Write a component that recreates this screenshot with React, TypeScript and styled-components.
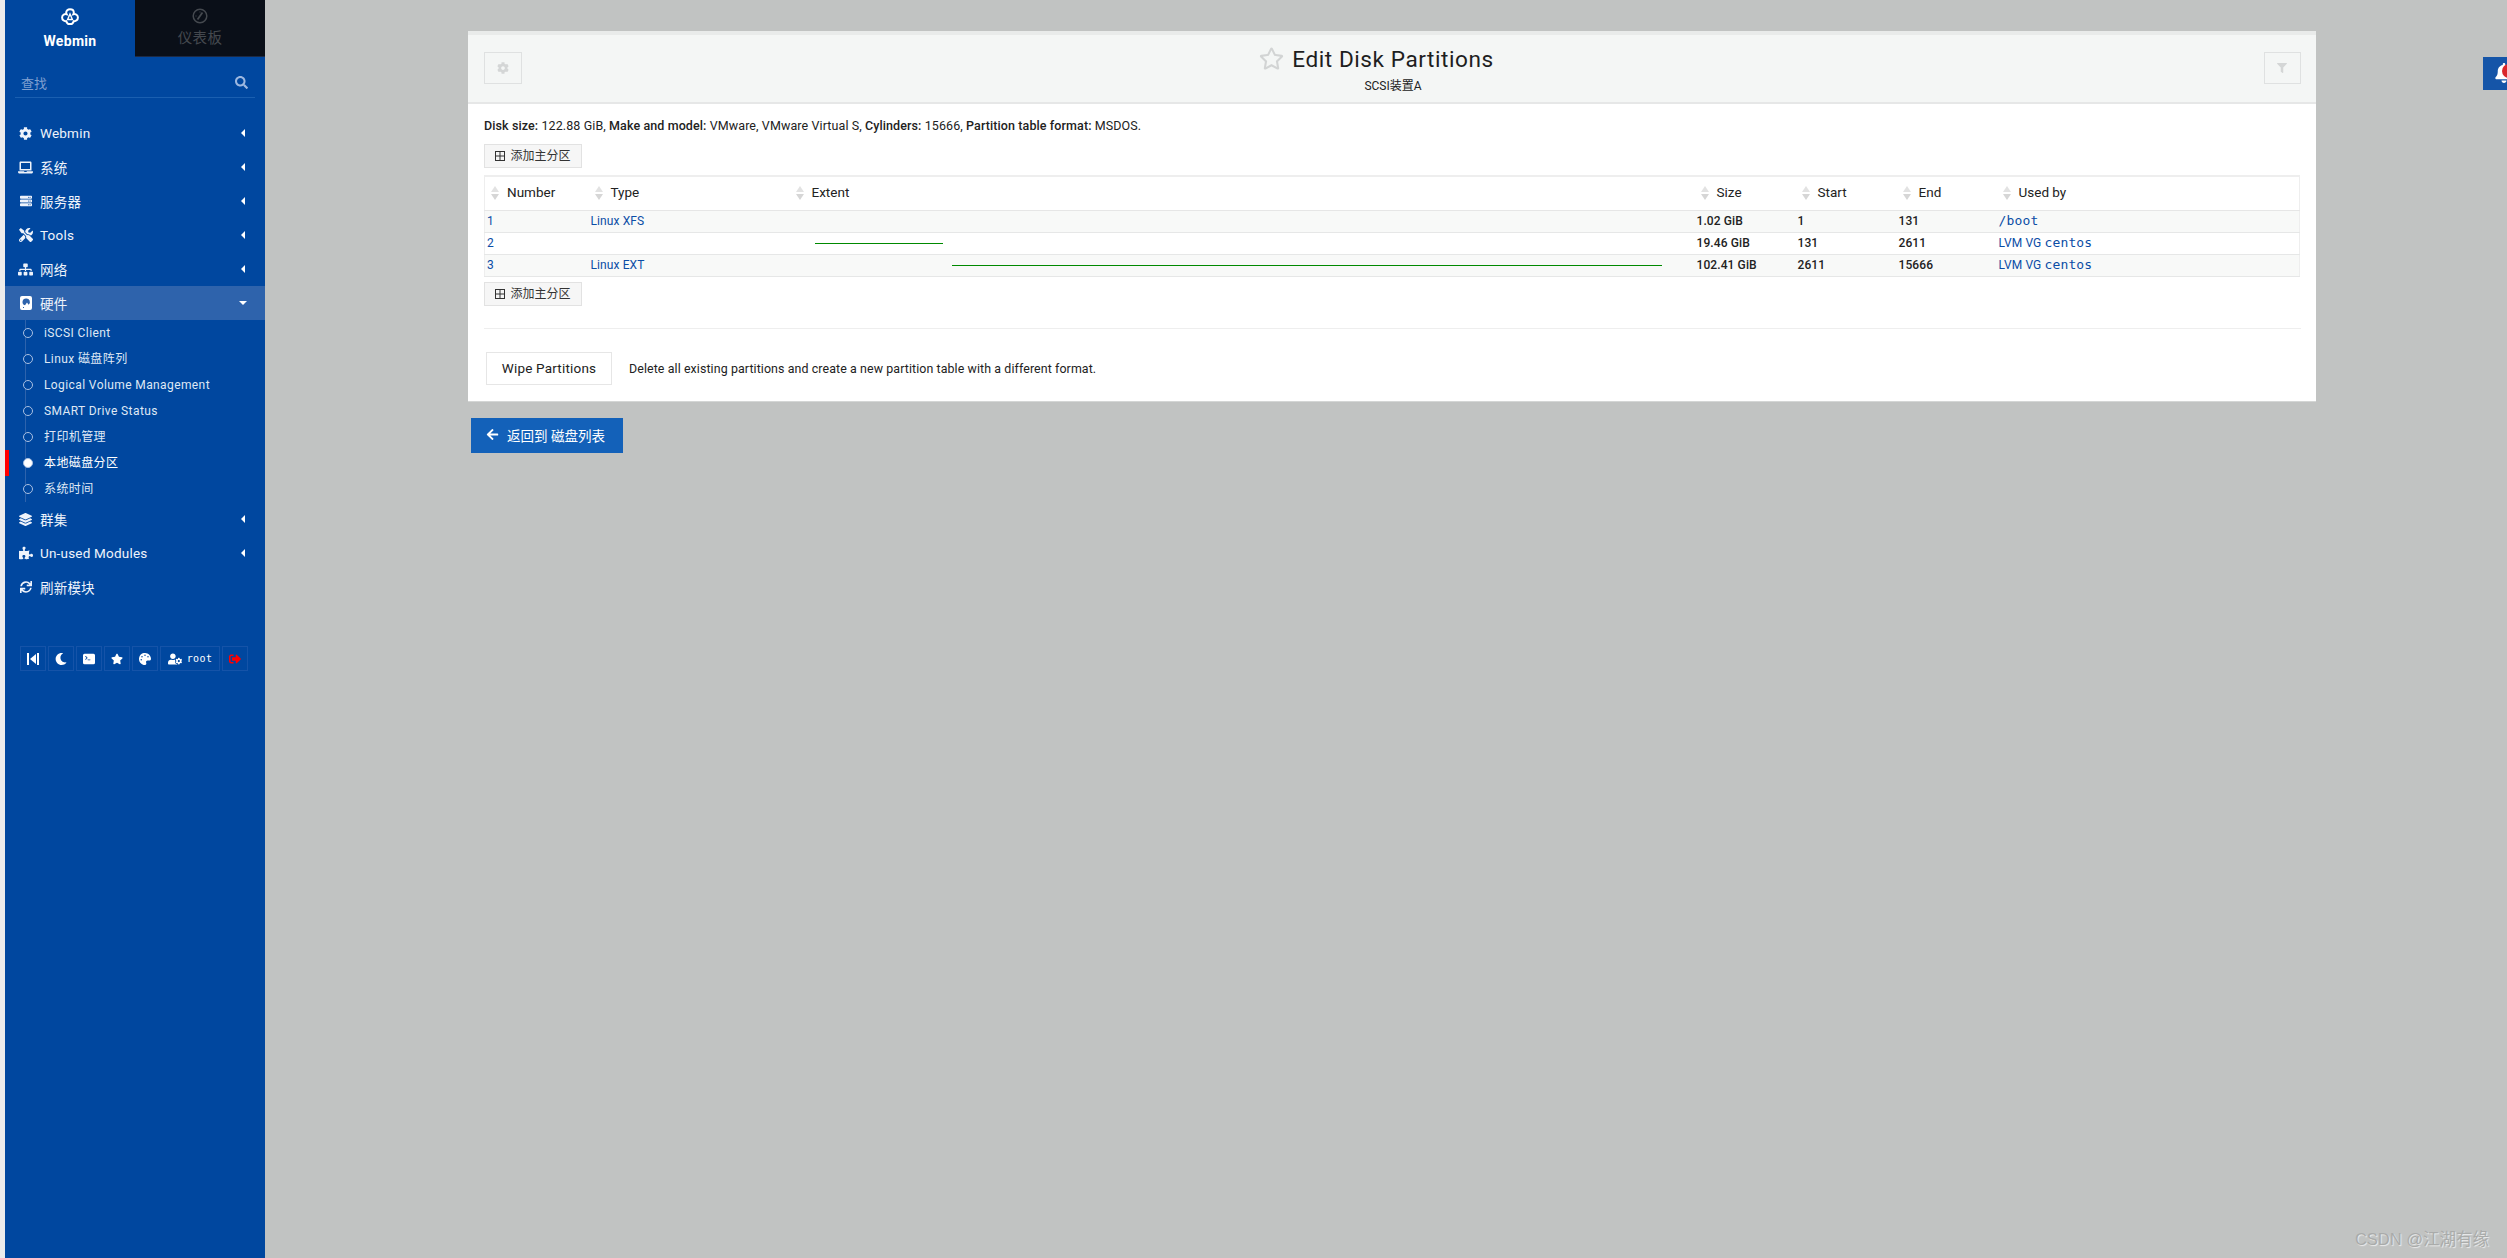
import { ReactNode } from 'react';
import styled, { createGlobalStyle } from 'styled-components';
import {
  FaArrowLeft,
  FaBell,
  FaCog,
  FaFilter,
  FaLaptop,
  FaLayerGroup,
  FaMoon,
  FaPalette,
  FaPuzzlePiece,
  FaRegStar,
  FaSearch,
  FaServer,
  FaSignOutAlt,
  FaSitemap,
  FaStar,
  FaSync,
  FaTools,
  FaUserCog,
} from 'react-icons/fa';
import { BsTerminalFill } from 'react-icons/bs';

const GlobalStyle = createGlobalStyle`
  html, body {
    margin: 0;
    padding: 0;
    height: 100%;
    overflow: hidden;
    background: #c1c3c2;
  }
  body, button, input {
    font-family: Roboto, "Noto Sans CJK SC", sans-serif;
  }
`;

const Page = styled.div`
  position: relative;
  display: flex;
  width: 2507px;
  height: 1258px;
  background: #c1c3c2;
  color: #1a1a1a;
`;

const EdgeStrip = styled.div`
  width: 5px;
  flex: none;
  background: #ececec;
`;

const Sidebar = styled.aside`
  width: 260px;
  flex: none;
  background: #00479f;
  color: #fff;
  display: flex;
  flex-direction: column;
`;

const Tabs = styled.div`
  display: grid;
  grid-template-columns: 130px 130px;
  height: 57px;
`;

const Tab = styled.div<{ $dark?: boolean }>`
  display: flex;
  flex-direction: column;
  align-items: center;
  padding-top: 8px;
  gap: 7px;
  box-sizing: border-box;
  font-size: ${(p) => (p.$dark ? '14.5px' : '14px')};
  line-height: 16px;
  letter-spacing: 0.3px;
  font-weight: ${(p) => (p.$dark ? 400 : 700)};
  background: ${(p) => (p.$dark ? '#0a0f18' : 'transparent')};
  color: ${(p) => (p.$dark ? '#44484e' : '#fff')};
  border-bottom: ${(p) => (p.$dark ? '1px solid #1d2a44' : 'none')};
`;

const SearchRow = styled.div`
  margin: 10px 10px 0;
  height: 30px;
  display: flex;
  align-items: center;
  justify-content: space-between;
  padding: 0 7px 0 6px;
  border-bottom: 1px solid #1a5fb0;
  font-size: 13px;
  color: #7f9fd0;
`;

const Menu = styled.nav`
  margin-top: 18px;
  display: flex;
  flex-direction: column;
`;

const MenuRow = styled.div<{ $active?: boolean }>`
  height: 34px;
  display: flex;
  align-items: center;
  padding: 0 20px 0 12px;
  font-size: 13.5px;
  letter-spacing: 0.2px;
  color: #eef3fb;
  background: ${(p) => (p.$active ? '#2e63ac' : 'transparent')};
`;

const MenuIcon = styled.span`
  width: 17px;
  margin-right: 6px;
  display: flex;
  align-items: center;
  justify-content: center;
  font-size: 13px;
`;

const MenuLabel = styled.span`
  flex: 1;
`;

const CaretLeft = styled.i`
  width: 0;
  height: 0;
  border-top: 4px solid transparent;
  border-bottom: 4px solid transparent;
  border-right: 4px solid #fff;
`;

const CaretDown = styled.i`
  width: 0;
  height: 0;
  margin-right: -2px;
  border-left: 4px solid transparent;
  border-right: 4px solid transparent;
  border-top: 4px solid #fff;
`;

const SubMenu = styled.div`
  position: relative;
  display: flex;
  flex-direction: column;
  &::before {
    content: '';
    position: absolute;
    left: 20px;
    top: 0;
    bottom: 0;
    width: 1px;
    background: #2e63ac;
  }
`;

const SubRow = styled.div<{ $active?: boolean }>`
  position: relative;
  height: 26px;
  display: flex;
  align-items: center;
  padding-left: 18px;
  gap: 11px;
  font-size: 12px;
  line-height: 14px;
  letter-spacing: 0.4px;
  color: ${(p) => (p.$active ? '#fff' : '#dfe8f5')};
  box-shadow: ${(p) => (p.$active ? 'inset 4px 0 0 #f00' : 'none')};
`;

const Dot = styled.i<{ $active?: boolean }>`
  position: relative;
  width: 10px;
  height: 10px;
  box-sizing: border-box;
  border-radius: 50%;
  border: 1px solid #a9c0e2;
  background: ${(p) => (p.$active ? '#fff' : '#00479f')};
`;

const Footer = styled.div`
  margin-top: 42px;
  padding-left: 15px;
  display: flex;
  gap: 2px;
`;

const FooterButton = styled.div<{ $wide?: boolean }>`
  width: ${(p) => (p.$wide ? '60px' : '26px')};
  height: 25px;
  box-sizing: border-box;
  border: 1px solid #1553a8;
  display: flex;
  align-items: center;
  justify-content: center;
  gap: 5px;
  font-size: 12px;
  color: #fff;
`;

const RootName = styled.span`
  font-family: 'DejaVu Sans Mono', monospace;
  font-size: 10px;
  letter-spacing: 0.4px;
`;

const Main = styled.main`
  flex: 1;
  padding: 31px 0 0 203px;
  display: flex;
  flex-direction: column;
  align-items: flex-start;
`;

const Panel = styled.section`
  width: 1848px;
  background: #fff;
  border-top: 4px solid #e9ebea;
  border-bottom: 1px solid #d4d6d5;
  box-sizing: border-box;
  height: 371px;
`;

const PanelHead = styled.header`
  height: 69px;
  box-sizing: border-box;
  background: #f4f6f5;
  border-bottom: 2px solid #e6e7e7;
  padding: 17px 15px 0 16px;
  display: flex;
  justify-content: space-between;
  align-items: flex-start;
`;

const HeadButton = styled.div<{ $wide?: boolean }>`
  width: ${(p) => (p.$wide ? '38px' : '37px')};
  height: 32px;
  box-sizing: border-box;
  border: 1px solid #dfe1e1;
  display: flex;
  align-items: center;
  justify-content: center;
  font-size: 12px;
  color: #d4d6d6;
`;

const TitleBlock = styled.div`
  display: flex;
  flex-direction: column;
  align-items: center;
  margin-top: -8px;
`;

const TitleRow = styled.div`
  display: flex;
  align-items: center;
  gap: 8px;
  height: 30px;
`;

const StarSlot = styled.span`
  margin-left: -33px;
  display: flex;
  margin-top: -2px;
`;

const Title = styled.h1`
  margin: 0;
  font-size: 22.6px;
  font-weight: 400;
  letter-spacing: 0.55px;
  color: #1e1e1e;
`;

const Subtitle = styled.div`
  font-size: 12px;
  line-height: 16px;
  margin-top: 4px;
  color: #222;
`;

const PanelBody = styled.div`
  padding: 13px 15px 0 16px;
`;

const DiskInfo = styled.p`
  margin: 0;
  font-size: 12.5px;
  line-height: 18px;
  letter-spacing: 0.1px;
  color: #222;
  b {
    font-weight: 500;
  }
`;

const AddButton = styled.div<{ $top: number }>`
  margin-top: ${(p) => p.$top}px;
  width: 98px;
  height: 24px;
  box-sizing: border-box;
  border: 1px solid #e2e2e2;
  background: #f6f6f6;
  display: flex;
  align-items: center;
  justify-content: center;
  gap: 5px;
  font-size: 12px;
  line-height: 14px;
  color: #333;
`;

const PartTable = styled.table`
  margin-top: 7px;
  width: 1815px;
  table-layout: fixed;
  border-collapse: collapse;
  font-size: 12px;
  border: 1px solid #eeeeee;
  border-top-width: 2px;
`;

const HeadCell = styled.th<{ $w: number }>`
  position: relative;
  width: ${(p) => p.$w}px;
  height: 34px;
  padding: 0 0 2px 22px;
  box-sizing: border-box;
  text-align: left;
  font-weight: 400;
  font-size: 13.5px;
  color: #222;
  border-bottom: 1px solid #e6e6e6;
`;

const SortMark = styled.i`
  position: absolute;
  left: 6px;
  top: 9px;
  display: flex;
  flex-direction: column;
  gap: 2px;
  &::before,
  &::after {
    content: '';
    width: 0;
    height: 0;
    border-left: 4px solid transparent;
    border-right: 4px solid transparent;
  }
  &::before {
    border-bottom: 6px solid #e2e2e2;
  }
  &::after {
    border-top: 6px solid #d6d6d6;
  }
`;

const Row = styled.tr<{ $odd: boolean }>`
  height: 22px;
  background: ${(p) => (p.$odd ? '#f8f9f8' : '#fff')};
  border-bottom: 1px solid #e6e7e7;
`;

const Cell = styled.td`
  padding: 0 2px;
  color: #222;
  font-weight: 500;
  line-height: 14px;
  letter-spacing: 0.1px;
  white-space: nowrap;
`;

const LinkCell = styled(Cell)`
  color: #0b4da6;
  font-weight: 400;
`;

const MonoLink = styled.span`
  font-family: 'DejaVu Sans Mono', monospace;
  font-size: 13px;
  line-height: 12px;
  letter-spacing: 0.15px;
`;

const ExtentBar = styled.div<{ $left: number; $width: number }>`
  margin-left: ${(p) => p.$left}px;
  width: ${(p) => p.$width}px;
  height: 1px;
  background: #008a00;
`;

const Divider = styled.hr`
  margin: 22px 0 23px;
  border: 0;
  border-top: 1px solid #eeeeee;
`;

const WipeRow = styled.div`
  display: flex;
  align-items: center;
  gap: 17px;
  padding-left: 2px;
  font-size: 12.4px;
  letter-spacing: 0.1px;
  color: #222;
`;

const WipeButton = styled.div`
  width: 126px;
  height: 33px;
  box-sizing: border-box;
  border: 1px solid #e6e6e6;
  background: #fff;
  display: flex;
  align-items: center;
  justify-content: center;
  font-size: 13.5px;
  letter-spacing: 0.2px;
`;

const BackButton = styled.div`
  margin: 16px 0 0 3px;
  width: 152px;
  height: 35px;
  box-sizing: border-box;
  padding: 0 3px 2px 0;
  background: #1361b9;
  color: #fff;
  display: flex;
  align-items: center;
  justify-content: center;
  gap: 8px;
  font-size: 13.5px;
`;

const BellTab = styled.div`
  position: absolute;
  right: 0;
  top: 57px;
  width: 24px;
  height: 33px;
  background: #1555a8;
  overflow: hidden;
  color: #fff;
  font-size: 20px;
  svg {
    position: absolute;
    left: 11px;
    top: 6px;
  }
  &::after {
    content: '';
    position: absolute;
    left: 19px;
    top: 7px;
    width: 14px;
    height: 14px;
    border-radius: 50%;
    background: #d9262b;
  }
`;

const Watermark = styled.div`
  position: absolute;
  right: 18px;
  bottom: 8px;
  font-size: 16.5px;
  color: #a9abaa;
  text-shadow: 1px 1px 1px #eeeeee;
  font-family: 'Liberation Sans', 'Noto Sans CJK SC', sans-serif;
`;

const WebminLogo = () => (
  <svg width="18" height="18" viewBox="0 0 18 18" fill="none" stroke="#fff" strokeWidth="2">
    <path d="M9 1.200c2.300 0 3.800 1.600 3.800 3.400 0 .6-.1 1.100-.4 1.600 2.300-.5 4.500.9 4.500 3.300 0 2.400-2 4-4.100 3.700-.6 1.200-1.200 2.200-2 2.800H7.200c-.8-.6-1.400-1.600-2-2.800C3.100 13.500 1.100 11.900 1.100 9.500c0-2.400 2.200-3.800 4.500-3.300-.3-.5-.4-1-.4-1.600C5.200 2.800 6.700 1.200 9 1.200z" />
    <path d="M9 6 6.600 11.500h4.800z" strokeWidth="1.400" />
  </svg>
);

const DashboardIcon = () => (
  <svg width="16" height="16" viewBox="0 0 16 16" fill="none" stroke="#45494f">
    <circle cx="8" cy="8" r="6.800" strokeWidth="1.500" />
    <path d="M5.500 11.500 10.500 4.500" strokeWidth="1.800" />
    <path d="M3.500 8h1M8 3.500v1" strokeWidth="1" />
  </svg>
);

const DiskIcon = () => (
  <svg width="12" height="14" viewBox="0 0 12 14">
    <path
      fill="#fff"
      fillRule="evenodd"
      d="M2 0h8a2 2 0 0 1 2 2v10a2 2 0 0 1-2 2H2a2 2 0 0 1-2-2V2a2 2 0 0 1 2-2zm4 2.500a3.500 3.500 0 0 0-1 6.850L7 6.500l1.600 2.200A3.500 3.500 0 0 0 6 2.500zM3 11v1h1v-1z"
    />
  </svg>
);

const CollapseIcon = () => (
  <svg width="12" height="12" viewBox="0 0 12 12" fill="#fff">
    <rect x="0" y="0" width="2" height="12" />
    <rect x="10" y="0" width="2" height="12" />
    <path d="M9 1v10L3 6z" />
  </svg>
);

const TablePlus = () => (
  <svg width="10" height="10" viewBox="0 0 10 10" fill="none" stroke="#333" strokeWidth="1">
    <rect x="0.500" y="0.500" width="9" height="9" />
    <path d="M5 0v10M0 5h10" />
  </svg>
);

type MenuItem = { icon: ReactNode; label: string; noCaret?: boolean };

const topItems: MenuItem[] = [
  { icon: <FaCog />, label: 'Webmin' },
  { icon: <FaLaptop size={15} />, label: '系统' },
  { icon: <FaServer size={12} />, label: '服务器' },
  { icon: <FaTools size={14} />, label: 'Tools' },
  { icon: <FaSitemap size={15} />, label: '网络' },
];

const subItems = [
  'iSCSI Client',
  'Linux 磁盘阵列',
  'Logical Volume Management',
  'SMART Drive Status',
  '打印机管理',
  '本地磁盘分区',
  '系统时间',
];

const bottomItems: MenuItem[] = [
  { icon: <FaLayerGroup />, label: '群集' },
  { icon: <FaPuzzlePiece size={14} />, label: 'Un-used Modules' },
  { icon: <FaSync size={12} />, label: '刷新模块', noCaret: true },
];

const columns = [
  { label: 'Number', w: 104 },
  { label: 'Type', w: 201 },
  { label: 'Extent', w: 905 },
  { label: 'Size', w: 101 },
  { label: 'Start', w: 101 },
  { label: 'End', w: 100 },
  { label: 'Used by', w: 303 },
];

const partitions = [
  { no: '1', type: 'Linux XFS', size: '1.02 GiB', start: '1', end: '131', used: '', mono: '/boot' },
  { no: '2', type: '', left: 23, width: 128, size: '19.46 GiB', start: '131', end: '2611', used: 'LVM VG ', mono: 'centos' },
  { no: '3', type: 'Linux EXT', left: 160, width: 710, size: '102.41 GiB', start: '2611', end: '15666', used: 'LVM VG ', mono: 'centos' },
];

const renderMenu = (items: MenuItem[]) =>
  items.map((item) => (
    <MenuRow key={item.label}>
      <MenuIcon>{item.icon}</MenuIcon>
      <MenuLabel>{item.label}</MenuLabel>
      {!item.noCaret && <CaretLeft />}
    </MenuRow>
  ));

const App = () => {
  return (
    <Page>
      <GlobalStyle />
      <EdgeStrip />
      <Sidebar>
        <Tabs>
          <Tab>
            <WebminLogo />
            Webmin
          </Tab>
          <Tab $dark>
            <DashboardIcon />
            仪表板
          </Tab>
        </Tabs>
        <SearchRow>
          查找
          <FaSearch size={13} color="#9db8e0" />
        </SearchRow>
        <Menu>
          {renderMenu(topItems)}
          <MenuRow $active>
            <MenuIcon>
              <DiskIcon />
            </MenuIcon>
            <MenuLabel>硬件</MenuLabel>
            <CaretDown />
          </MenuRow>
          <SubMenu>
            {subItems.map((label) => (
              <SubRow key={label} $active={label === '本地磁盘分区'}>
                <Dot $active={label === '本地磁盘分区'} />
                {label}
              </SubRow>
            ))}
          </SubMenu>
          {renderMenu(bottomItems)}
        </Menu>
        <Footer>
          <FooterButton>
            <CollapseIcon />
          </FooterButton>
          <FooterButton>
            <FaMoon />
          </FooterButton>
          <FooterButton>
            <BsTerminalFill />
          </FooterButton>
          <FooterButton>
            <FaStar />
          </FooterButton>
          <FooterButton>
            <FaPalette />
          </FooterButton>
          <FooterButton $wide>
            <FaUserCog size={14} />
            <RootName>root</RootName>
          </FooterButton>
          <FooterButton>
            <FaSignOutAlt color="#f00" />
          </FooterButton>
        </Footer>
      </Sidebar>
      <Main>
        <Panel>
          <PanelHead>
            <HeadButton $wide>
              <FaCog />
            </HeadButton>
            <TitleBlock>
              <TitleRow>
                <StarSlot>
                  <FaRegStar size={25} color="#d2d4d4" />
                </StarSlot>
                <Title>Edit Disk Partitions</Title>
              </TitleRow>
              <Subtitle>SCSI装置A</Subtitle>
            </TitleBlock>
            <HeadButton>
              <FaFilter size={10} />
            </HeadButton>
          </PanelHead>
          <PanelBody>
            <DiskInfo>
              <b>Disk size:</b> 122.88 GiB, <b>Make and model:</b> VMware, VMware Virtual S,{' '}
              <b>Cylinders:</b> 15666, <b>Partition table format:</b> MSDOS.
            </DiskInfo>
            <AddButton $top={9}>
              <TablePlus />
              添加主分区
            </AddButton>
            <PartTable>
              <thead>
                <tr>
                  {columns.map((col) => (
                    <HeadCell key={col.label} $w={col.w}>
                      <SortMark />
                      {col.label}
                    </HeadCell>
                  ))}
                </tr>
              </thead>
              <tbody>
                {partitions.map((part, i) => (
                  <Row key={part.no} $odd={i % 2 === 0}>
                    <LinkCell>{part.no}</LinkCell>
                    <LinkCell>{part.type}</LinkCell>
                    <Cell>
                      {part.width && <ExtentBar $left={part.left} $width={part.width} />}
                    </Cell>
                    <Cell>{part.size}</Cell>
                    <Cell>{part.start}</Cell>
                    <Cell>{part.end}</Cell>
                    <LinkCell>
                      {part.used}
                      <MonoLink>{part.mono}</MonoLink>
                    </LinkCell>
                  </Row>
                ))}
              </tbody>
            </PartTable>
            <AddButton $top={5}>
              <TablePlus />
              添加主分区
            </AddButton>
            <Divider />
            <WipeRow>
              <WipeButton>Wipe Partitions</WipeButton>
              Delete all existing partitions and create a new partition table with a different format.
            </WipeRow>
          </PanelBody>
        </Panel>
        <BackButton>
          <FaArrowLeft size={13} />
          返回到 磁盘列表
        </BackButton>
      </Main>
      <BellTab>
        <FaBell />
      </BellTab>
      <Watermark>CSDN @江湖有缘</Watermark>
    </Page>
  );
};

export default App;
